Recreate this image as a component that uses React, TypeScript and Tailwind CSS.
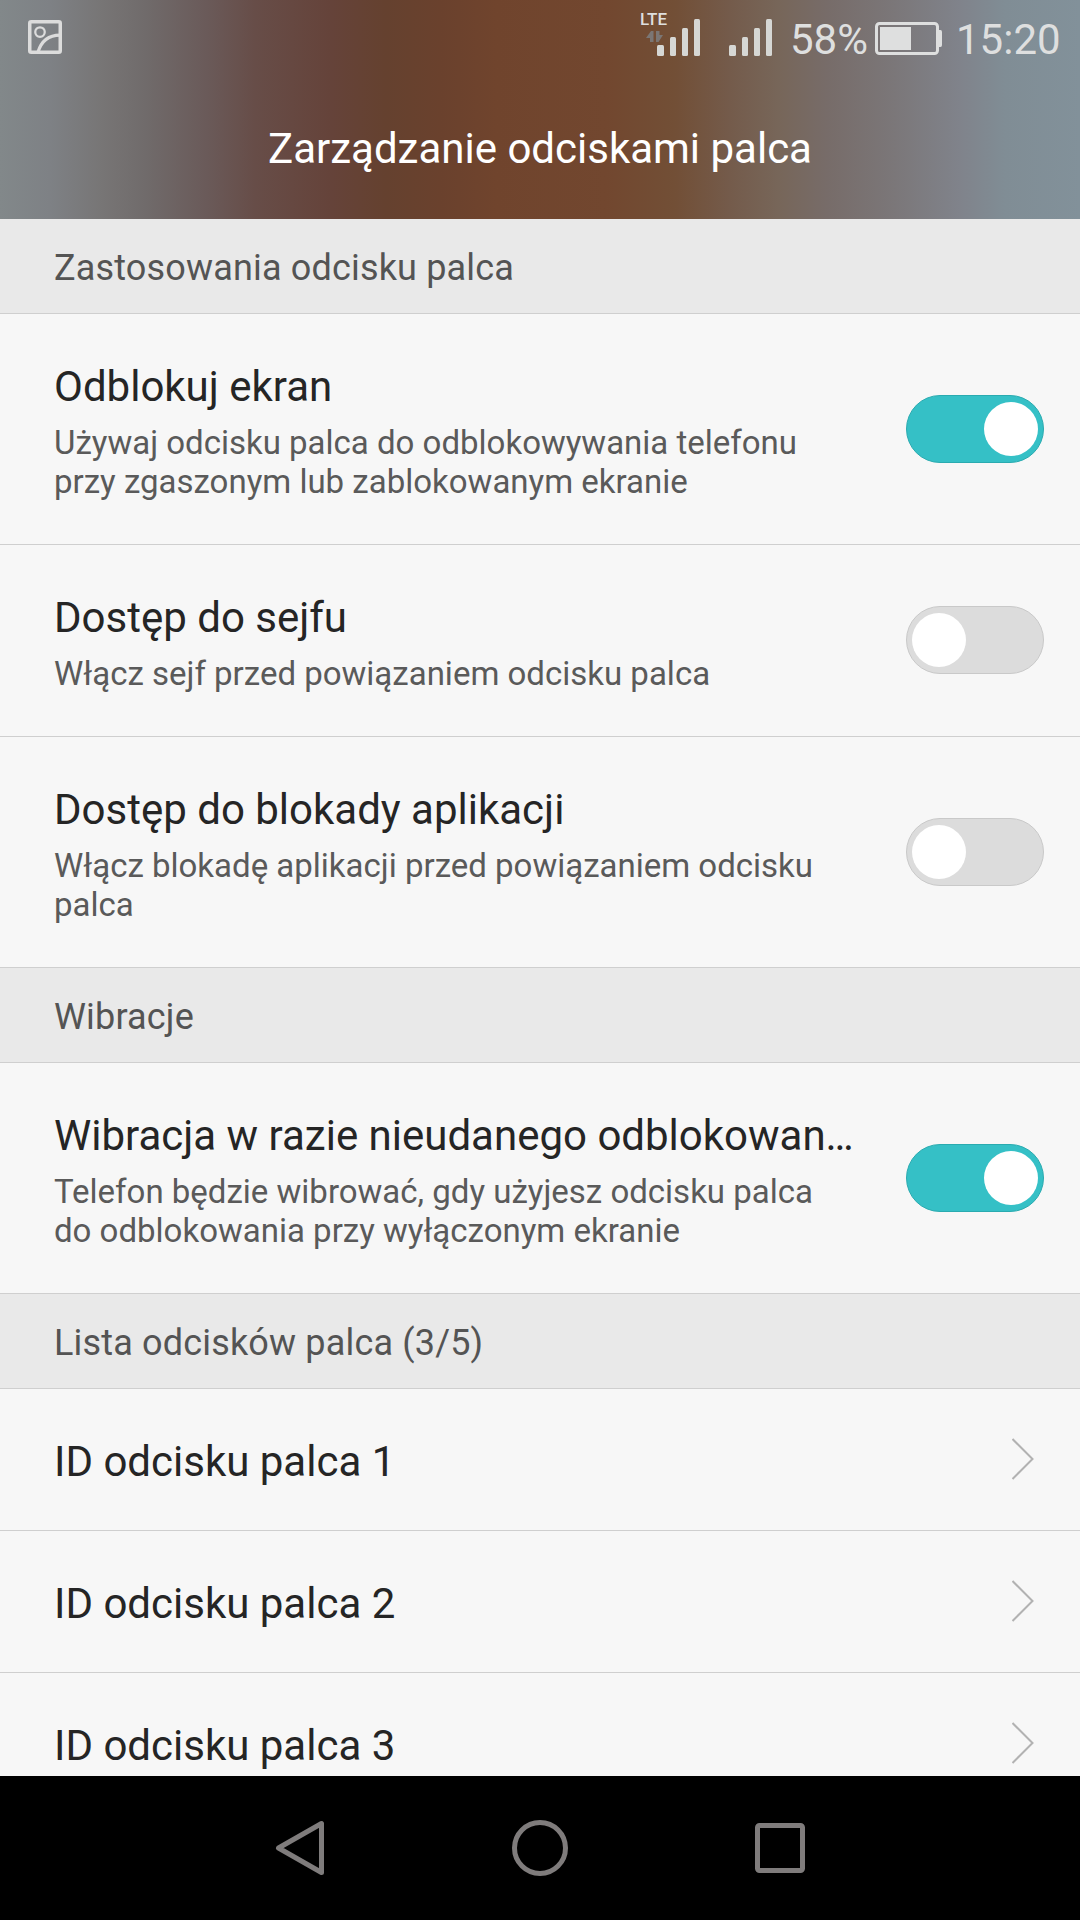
interface SettingItem {
  title: string;
  summary: string;
  enabled: boolean;
}

const USAGE_ITEMS: SettingItem[] = [
  {
    title: "Odblokuj ekran",
    summary: "Używaj odcisku palca do odblokowywania telefonu przy zgaszonym lub zablokowanym ekranie",
    enabled: true,
  },
  {
    title: "Dostęp do sejfu",
    summary: "Włącz sejf przed powiązaniem odcisku palca",
    enabled: false,
  },
  {
    title: "Dostęp do blokady aplikacji",
    summary: "Włącz blokadę aplikacji przed powiązaniem odcisku palca",
    enabled: false,
  },
];

const VIBRATION_ITEMS: SettingItem[] = [
  {
    title: "Wibracja w razie nieudanego odblokowan…",
    summary: "Telefon będzie wibrować, gdy użyjesz odcisku palca do odblokowania przy wyłączonym ekranie",
    enabled: true,
  },
];

const FINGERPRINTS = ["ID odcisku palca 1", "ID odcisku palca 2", "ID odcisku palca 3"];

function SignalBars() {
  return (
    <svg width="44" height="37" viewBox="0 0 44 37" fill="#d6d7d4">
      <rect x="0" y="26" width="7" height="11" rx="1.5" />
      <rect x="13" y="18" width="6" height="19" rx="1.5" />
      <rect x="25" y="9" width="6" height="28" rx="1.5" />
      <rect x="37" y="0" width="6" height="37" rx="1.5" />
    </svg>
  );
}

function StatusBar() {
  return (
    <div className="flex h-[75px] items-start pl-7 text-[#dedfdf]">
      <svg className="mt-5" width="34" height="34" viewBox="0 0 34 34" fill="none" stroke="#dcdcdc">
        <rect x="1.75" y="1.75" width="30.5" height="30.5" rx="1.5" strokeWidth="3.500" />
        <circle cx="12" cy="12" r="4.750" strokeWidth="2.250" />
        <path d="M10 32C13 22 20 15 32 15" strokeWidth="3.250" />
      </svg>

      {/* SIM 1 with its network type */}
      <div className="relative mt-[19px] ml-[595px]">
        <SignalBars />
        <span className="absolute -top-[10px] -left-[17px] text-[17px] leading-5 font-medium">LTE</span>
        <svg className="absolute top-3 -left-[11px]" width="17" height="11" viewBox="0 0 17 11" fill="#7b7674">
          <path d="M0 7L5 0H7.500V11H4V7ZM10 0H13.500V4H17L12.500 11H10Z" />
        </svg>
      </div>
      <div className="mt-[19px] ml-[28px]">
        <SignalBars />
      </div>

      <span className="mt-[15px] ml-[17px] w-[85px] text-[42px] leading-[50px]">58%</span>
      <svg className="mt-[22px]" width="67" height="33" viewBox="0 0 67 33">
        <rect x="1.5" y="1.5" width="61" height="30" rx="3" fill="none" stroke="#dedfdf" strokeWidth="3" />
        <rect x="5" y="5" width="31" height="23" fill="#dedfdf" />
        <path d="M63 8H65.500Q67 8 67 10V23Q67 25 65.500 25H63Z" fill="#dedfdf" />
      </svg>
      <span className="mt-[15px] ml-[14px] text-[42px] leading-[50px]">15:20</span>
    </div>
  );
}

function SectionHeader({ label }: { label: string }) {
  return (
    <h2 className="flex h-[95px] shrink-0 items-center border-b border-[#cfcfcf] bg-[#e9e9e9] px-[54px] pt-[3px] text-[36px] tracking-[0.17px] text-[#545454]">
      {label}
    </h2>
  );
}

function Toggle({ enabled }: { enabled: boolean }) {
  return (
    <span
      role="switch"
      aria-checked={enabled}
      className={`flex h-[68px] w-[138px] shrink-0 items-center rounded-full border px-[5px] ${
        enabled ? "justify-end border-[#2aabb0] bg-[#35c0c6]" : "justify-start border-[#c9c9c9] bg-[#dcdcdc]"
      }`}
    >
      <span className="size-[54px] rounded-full bg-white" />
    </span>
  );
}

function SettingRow({ item }: { item: SettingItem }) {
  return (
    <div className="flex shrink-0 items-center justify-between border-b border-[#cfcfcf] pr-9 pl-[54px]">
      <div className="w-[810px] pt-[48px] pb-[43px]">
        <div className="text-[42px] leading-[50px] whitespace-nowrap text-[#252525]">{item.title}</div>
        <div className="mt-[11px] w-[780px] text-[33px] leading-[39px] text-[#5a5a5a]">{item.summary}</div>
      </div>
      <div className="pb-px">
        <Toggle enabled={item.enabled} />
      </div>
    </div>
  );
}

function FingerprintRow({ label }: { label: string }) {
  return (
    <div className="flex h-[142px] shrink-0 items-center justify-between border-b border-[#cfcfcf] pr-[45px] pl-[54px] text-[42px] text-[#252525]">
      <span className="pt-1">{label}</span>
      <svg className="mb-0.5" width="23" height="42" viewBox="0 0 23 42" fill="none" stroke="#b2b2b2" strokeWidth="2">
        <path d="M0.500 1L20.500 21L0.500 41" />
      </svg>
    </div>
  );
}

function NavBar() {
  return (
    <nav className="flex h-36 items-center justify-center gap-[180px] bg-black">
      <svg width="60" height="60" viewBox="0 0 60 60" fill="none" stroke="#7f7c7c" strokeWidth="5" strokeLinejoin="round">
        <path d="M8.500 30L51.500 5.500V54.500Z" />
      </svg>
      <svg width="60" height="60" viewBox="0 0 60 60" fill="none" stroke="#7f7c7c" strokeWidth="5">
        <circle cx="30" cy="30" r="25.500" />
      </svg>
      <svg width="60" height="60" viewBox="0 0 60 60" fill="none" stroke="#7f7c7c" strokeWidth="5">
        <rect x="7.500" y="7.500" width="45" height="45" rx="2" />
      </svg>
    </nav>
  );
}

export default function App() {
  return (
    <div className="flex h-[1920px] w-[1080px] flex-col overflow-hidden bg-[#f7f7f7] font-['Roboto',sans-serif]">
      <header className="h-[219px] shrink-0 bg-[linear-gradient(90deg,#82888a_0px,#7e8185_50px,#777575_103px,#706b6b_145px,#6a5a59_207px,#674d48_255px,#65433a_330px,#65412f_386px,#6a412d_440px,#70442d_496px,#72472f_606px,#724f36_675px,#745b4b_730px,#776659_778px,#776c69_827px,#7b7779_895px,#80838b_960px,#808d95_1005px,#82919a_1080px)]">
        <StatusBar />
        <h1 className="pt-[49px] text-center text-[42px] leading-[50px] text-white">Zarządzanie odciskami palca</h1>
      </header>

      <main className="flex min-h-0 flex-1 flex-col overflow-hidden">
        <SectionHeader label="Zastosowania odcisku palca" />
        {USAGE_ITEMS.map((item) => (
          <SettingRow key={item.title} item={item} />
        ))}
        <SectionHeader label="Wibracje" />
        {VIBRATION_ITEMS.map((item) => (
          <SettingRow key={item.title} item={item} />
        ))}
        <SectionHeader label="Lista odcisków palca (3/5)" />
        {FINGERPRINTS.map((label) => (
          <FingerprintRow key={label} label={label} />
        ))}
      </main>

      <NavBar />
    </div>
  );
}
